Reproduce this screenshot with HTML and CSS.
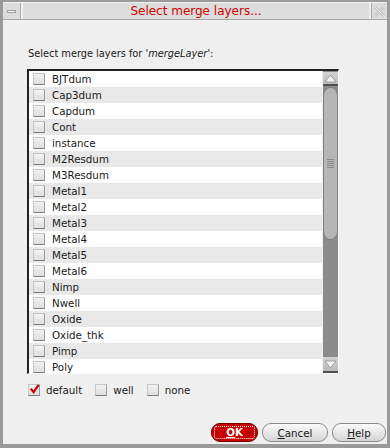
FILE: index.html
```html
<!DOCTYPE html>
<html lang="en">
  <head>
    <meta charset="UTF-8">
    <title>Select merge layers...</title>
    <link rel="stylesheet" href="styles.css">
  </head>
  <body>
    <div class="window">
      <div class="titlebar">
        <div class="tb-btn tb-min"><span class="min-bar"></span></div>
        <div class="tb-title">Select merge layers...</div>
        <div class="tb-btn tb-close">
          <svg width="11" height="11" viewBox="0 0 11 11">
            <path d="M1 1 L10 10 M10 1 L1 10" stroke="#c4c4c4" stroke-width="3" fill="none"/>
            <path d="M1 1 L10 10 M10 1 L1 10" stroke="#e8e8e8" stroke-width="1" fill="none"/>
          </svg>
        </div>
      </div>

      <div class="content">
        <p class="prompt">Select merge layers for '<i>mergeLayer</i>':</p>

        <div class="listbox">
          <div class="list">
            <div class="row"><span class="check"></span>BJTdum</div>
            <div class="row alt"><span class="check"></span>Cap3dum</div>
            <div class="row"><span class="check"></span>Capdum</div>
            <div class="row alt"><span class="check"></span>Cont</div>
            <div class="row"><span class="check"></span>instance</div>
            <div class="row alt"><span class="check"></span>M2Resdum</div>
            <div class="row"><span class="check"></span>M3Resdum</div>
            <div class="row alt"><span class="check"></span>Metal1</div>
            <div class="row"><span class="check"></span>Metal2</div>
            <div class="row alt"><span class="check"></span>Metal3</div>
            <div class="row"><span class="check"></span>Metal4</div>
            <div class="row alt"><span class="check"></span>Metal5</div>
            <div class="row"><span class="check"></span>Metal6</div>
            <div class="row alt"><span class="check"></span>Nimp</div>
            <div class="row"><span class="check"></span>Nwell</div>
            <div class="row alt"><span class="check"></span>Oxide</div>
            <div class="row"><span class="check"></span>Oxide_thk</div>
            <div class="row alt"><span class="check"></span>Pimp</div>
            <div class="row"><span class="check"></span>Poly</div>
          </div>
          <div class="scrollbar">
            <div class="arrow arrow-up">
              <svg width="13" height="9" viewBox="0 0 13 9"><path d="M6.5 1 L12 8 L1 8 Z" fill="#f4f4f4" stroke="#9a9a9a" stroke-width="1"/></svg>
            </div>
            <div class="thumb"><span class="grip"></span></div>
            <div class="trough"></div>
            <div class="arrow arrow-down">
              <svg width="13" height="9" viewBox="0 0 13 9"><path d="M1 1 L12 1 L6.5 8 Z" fill="#f4f4f4" stroke="#9a9a9a" stroke-width="1"/></svg>
            </div>
          </div>
        </div>

        <div class="options">
          <label class="opt"><span class="check checked">
            <svg width="12" height="12" viewBox="0 0 12 12"><path d="M2 5.5 L5 9.5 L10.5 1.5" stroke="#d00000" stroke-width="2.4" fill="none"/></svg>
          </span>default</label>
          <label class="opt"><span class="check"></span>well</label>
          <label class="opt"><span class="check"></span>none</label>
        </div>

        <div class="buttons">
          <button class="btn btn-ok"><span class="focus"><u>O</u>K</span></button>
          <button class="btn btn-cancel"><u>C</u>ancel</button>
          <button class="btn btn-help"><u>H</u>elp</button>
        </div>
      </div>
    </div>
  </body>
</html>
```
FILE: styles.css
```css
* {
  box-sizing: border-box;
  margin: 0;
  padding: 0;
}

body {
  width: 390px;
  height: 448px;
  font-family: "DejaVu Sans", Verdana, sans-serif;
  font-size: 10.3px;
  color: #1a1a1a;
  background: #efefef;
}

.window {
  height: 448px;
  border: 3px solid #9a9a9a;
  border-top-width: 2px;
  border-bottom-width: 4px;
  background: #efefef;
  display: flex;
  flex-direction: column;
}

.titlebar {
  height: 18px;
  display: flex;
  gap: 2px;
  padding-top: 1px;
  border-bottom: 1px solid #a8a8a8;
}

.tb-btn {
  width: 18px;
  background: #dcdcdc;
  display: flex;
  align-items: center;
  justify-content: center;
}

.tb-min {
  border-right: 1px solid #a8a8a8;
}

.min-bar {
  width: 9px;
  height: 3px;
  background: #f4f4f4;
  border: 1px solid #a0a0a0;
}

.tb-close {
  width: 16px;
  border-left: 1px solid #a8a8a8;
}

.tb-title {
  flex: 1;
  background: #dcdcdc;
  color: #d00000;
  font-size: 12px;
  text-align: center;
  line-height: 17px;
}

.content {
  flex: 1;
  padding: 27px 0 0 24px;
  display: flex;
  flex-direction: column;
}

.prompt {
  height: 22px;
  line-height: 14px;
  font-size: 9.8px;
  padding-left: 1px;
}

.listbox {
  width: 312px;
  height: 305px;
  display: flex;
  border: 2px solid #222;
  border-right: 1px solid #fafafa;
  border-bottom: 1px solid #fafafa;
  background: #fff;
  overflow: hidden;
}

.list {
  flex: 1;
  overflow: hidden;
}

.row {
  height: 16px;
  display: flex;
  align-items: center;
  gap: 7px;
  padding-left: 4px;
  background: #fff;
  white-space: nowrap;
}

.row.alt {
  background: #e8e8e8;
}

.check {
  width: 12px;
  height: 12px;
  flex: none;
  background: linear-gradient(#f2f2f2, #dedede);
  border: 1px solid #c6c6c6;
  border-bottom-color: #7c7c7c;
  border-right-color: #9c9c9c;
  display: flex;
  align-items: center;
  justify-content: center;
}

.check.checked svg {
  margin: -2px -1px 0 0;
}

.scrollbar {
  width: 16px;
  display: flex;
  flex-direction: column;
  background: #8c8c8c;
  border-left: 1px solid #efefef;
  padding-top: 1px;
}

.arrow {
  height: 14px;
  background: linear-gradient(#d2d2d2, #bcbcbc);
  display: flex;
  align-items: center;
  justify-content: center;
}

.arrow-up {
  border-bottom: 2px solid #505050;
}

.arrow-down {
  border-bottom: 2px solid #505050;
  height: 16px;
}

.thumb {
  height: 153px;
  margin-top: 1px;
  background: #b6b6b6;
  border: 1px solid #7e7e7e;
  border-radius: 7px 7px 7px 7px / 9px 9px 9px 9px;
  display: flex;
  align-items: center;
  justify-content: center;
}

.grip {
  width: 7px;
  height: 9px;
  background: repeating-linear-gradient(#8a8a8a 0 1px, transparent 1px 2px);
}

.trough {
  flex: 1;
  background: #8c8c8c;
}

.options {
  display: flex;
  align-items: center;
  height: 18px;
  margin-top: 7px;
  padding-left: 1px;
}

.opt {
  display: flex;
  align-items: center;
  gap: 6px;
  margin-right: 13px;
}

.buttons {
  margin-top: auto;
  margin-bottom: 2px;
  display: flex;
  justify-content: flex-end;
  gap: 4px;
  padding-right: 1px;
}

.btn {
  height: 19px;
  font-family: "DejaVu Sans", Verdana, sans-serif;
  font-size: 10.3px;
  color: #1a1a1a;
  border: 1px solid #8c8c8c;
  border-radius: 9px;
  background: linear-gradient(#fbfbfb, #e4e4e4 60%, #d4d4d4);
}

.btn-ok {
  width: 47px;
  background: #c60000;
  border-color: #7a0000;
  color: #fff;
  font-weight: bold;
  padding: 2px;
}

.btn-ok .focus {
  display: block;
  height: 13px;
  line-height: 11px;
  border: 1px dotted #fff;
  border-radius: 2px;
}

.btn-cancel {
  width: 66px;
}

.btn-help {
  width: 54px;
}
```
